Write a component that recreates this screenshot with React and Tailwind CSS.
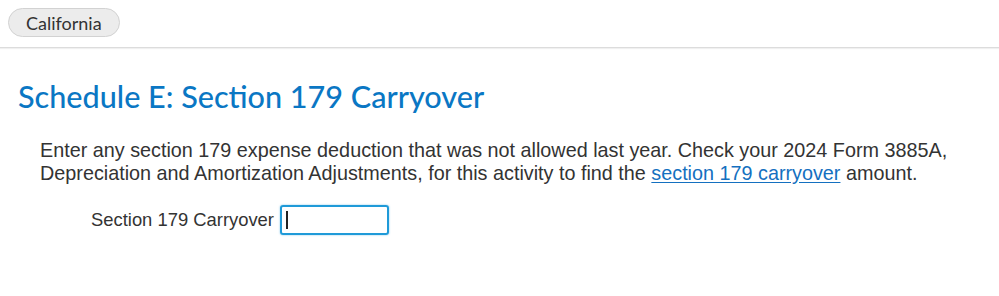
import React from "react";

const App = () => {
  return (
    <div className="w-[999px] h-[296px] bg-white overflow-hidden">
      {/* State tab bar */}
      <div className="h-[48px] px-[8px] pt-[8px] border-b border-[#dcdcdc] shadow-[0_1px_1px_rgba(0,0,0,0.06)]">
        <button className="h-[29px] px-[17px] rounded-full bg-[#ececec] border border-[#d2d2d2] text-[18px] text-[#333] font-['Lato',sans-serif] leading-none">
          California
        </button>
      </div>

      <h1 className="mt-[31px] ml-[18px] text-[30.6px] leading-[36px] text-[#0a77c4] font-['Lato',sans-serif] font-medium">
        Schedule E: Section 179 Carryover
      </h1>

      <p className="mt-[24px] ml-[40px] text-[19.8px] leading-[23px] text-[#333] font-['Liberation_Sans',Arial,sans-serif]">
        Enter any section 179 expense deduction that was not allowed last year. Check your 2024 Form 3885A,
        <br />
        Depreciation and Amortization Adjustments, for this activity to find the{" "}
        <a href="#" className="text-[#1470c0] underline underline-offset-2">
          section 179 carryover
        </a>{" "}
        amount.
      </p>

      <div className="mt-[20px] ml-[91px] flex items-center gap-[6px] font-['Liberation_Sans',Arial,sans-serif]">
        <label className="text-[18.4px] text-[#333]">Section 179 Carryover</label>
        <div className="w-[109px] h-[30px] rounded-[3px] border-2 border-[#1f9ad8] shadow-[0_0_2px_rgba(31,154,216,0.6)] flex items-center pl-[4px]">
          <span className="w-[2px] h-[18px] bg-[#222]" />
        </div>
      </div>
    </div>
  );
};

export default App;
